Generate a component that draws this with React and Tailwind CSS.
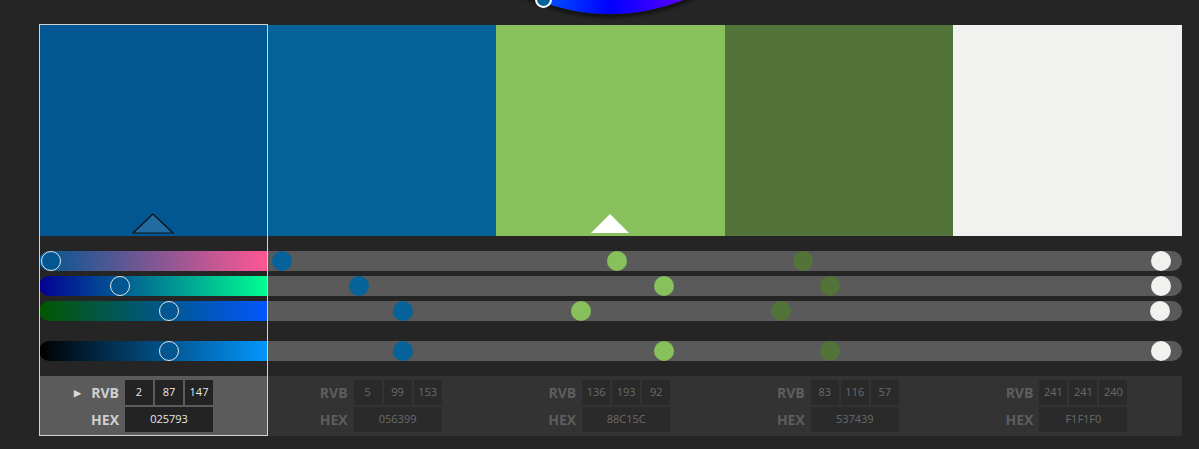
import React from "react";

const colors = [
  { rgb: [2, 87, 147], hex: "025793" },
  { rgb: [5, 99, 153], hex: "056399" },
  { rgb: [136, 193, 92], hex: "88C15C" },
  { rgb: [83, 116, 57], hex: "537439" },
  { rgb: [241, 241, 240], hex: "F1F1F0" },
];

const selected = 0;
const hovered = 2;

function gradients([r, g, b]) {
  const m = Math.max(r, g, b) || 1;
  const k = 255 / m;
  return [
    `linear-gradient(to right, rgb(0,${g},${b}), rgb(255,${g},${b}))`,
    `linear-gradient(to right, rgb(${r},0,${b}), rgb(${r},255,${b}))`,
    `linear-gradient(to right, rgb(${r},${g},0), rgb(${r},${g},255))`,
    `linear-gradient(to right, #000, rgb(${Math.round(r * k)},${Math.round(g * k)},${Math.round(b * k)}))`,
  ];
}

function Slider({ value, color, bg, active, first, last, extraTop }) {
  return (
    <div
      className={`relative h-5 ${first ? "rounded-l-full" : ""} ${last ? "rounded-r-full" : ""} ${
        bg ? "" : "bg-[#5a5a5a]"
      } ${extraTop ? "mt-[15px]" : ""}`}
      style={bg ? { backgroundImage: bg } : undefined}
    >
      <div
        className={`absolute top-0 size-5 rounded-full ${active ? "border-[1.5px] border-[#e6e6e6]" : ""}`}
        style={{ left: `calc((100% - 20px) * ${value / 255})`, background: color }}
      />
    </div>
  );
}

function Column({ c, i }) {
  const active = i === selected;
  const hex = `#${c.hex}`;
  const grads = gradients(c.rgb);
  const vals = [...c.rgb, Math.max(...c.rgb)];
  return (
    <div className="relative flex flex-1 flex-col">
      <div className="relative h-[211px]" style={{ background: hex }}>
        {active && (
          <svg className="absolute bottom-[2px] left-1/2 -translate-x-1/2" width="42" height="21" viewBox="0 0 42 21">
            <polygon points="21,1 1,20 41,20" fill="rgba(255,255,255,0.12)" stroke="#101010" strokeWidth="1.2" />
          </svg>
        )}
        {i === hovered && (
          <svg className="absolute bottom-[3px] left-1/2 -translate-x-1/2" width="40" height="20" viewBox="0 0 40 20">
            <polygon points="20,1 1,20 39,20" fill="#ffffff" />
          </svg>
        )}
      </div>

      <div className="mt-[15px] flex flex-col gap-[5px]">
        {vals.map((v, j) => (
          <Slider
            key={j}
            value={v}
            color={hex}
            bg={active ? grads[j] : null}
            active={active}
            first={i === 0}
            last={i === colors.length - 1}
            extraTop={j === 3}
          />
        ))}
      </div>

      <div
        className={`mt-[15px] flex h-[60px] flex-col gap-[2px] pt-[4px] ${
          active ? "bg-[#5b5b5b]" : "bg-[#333333]"
        }`}
      >
        <div className="flex h-[25px] items-center">
          <div
            className={`flex w-[80px] items-center justify-end gap-[10px] text-[14px] font-bold ${
              active ? "text-[#cfcfcf]" : "text-[#5e5e5e]"
            }`}
          >
            {active && <span className="text-[9px] text-[#d8d8d8]">▶</span>}
            <span>RVB</span>
          </div>
          <div className="ml-[6px] flex gap-[2px]">
            {c.rgb.map((n, j) => (
              <div
                key={j}
                className={`flex h-[25px] w-[28px] items-center justify-center text-[11px] ${
                  active ? "bg-[#232323] text-[#e8e8e8]" : "bg-[#2a2a2a] text-[#6a6a6a]"
                }`}
              >
                {n}
              </div>
            ))}
          </div>
        </div>
        <div className="flex h-[25px] items-center">
          <div
            className={`w-[80px] text-right text-[14px] font-bold ${
              active ? "text-[#cfcfcf]" : "text-[#5e5e5e]"
            }`}
          >
            HEX
          </div>
          <div
            className={`ml-[6px] flex h-[25px] w-[88px] items-center justify-center text-[11px] ${
              active ? "bg-[#232323] text-[#e8e8e8]" : "bg-[#2a2a2a] text-[#6a6a6a]"
            }`}
          >
            {c.hex}
          </div>
        </div>
      </div>

      {active && (
        <div className="pointer-events-none absolute -top-px bottom-0 left-0 right-0 z-10 border border-[#d2d2d2]" />
      )}
    </div>
  );
}

export default function App() {
  return (
    <div className="relative h-[449px] w-full overflow-hidden bg-[#252525] font-['Open_Sans',sans-serif]">
      {/* colour wheel peeking from the top */}
      <div className="absolute left-[410px] top-[-386px] size-[400px] rounded-full shadow-[0_2px_3px_2px_rgba(0,0,0,0.45)] [background-image:conic-gradient(#ff0_0deg,#f00_60deg,#f0f_120deg,#00f_180deg,#0ff_240deg,#0f0_300deg,#ff0_360deg)]" />
      <div className="absolute left-[535px] top-[-9px] size-[17px] rounded-full border-2 border-white bg-[#056399]" />

      <div className="flex w-[1182px] pl-[39px] pt-[25px]">
        {colors.map((c, i) => (
          <Column key={c.hex} c={c} i={i} />
        ))}
      </div>
    </div>
  );
}
